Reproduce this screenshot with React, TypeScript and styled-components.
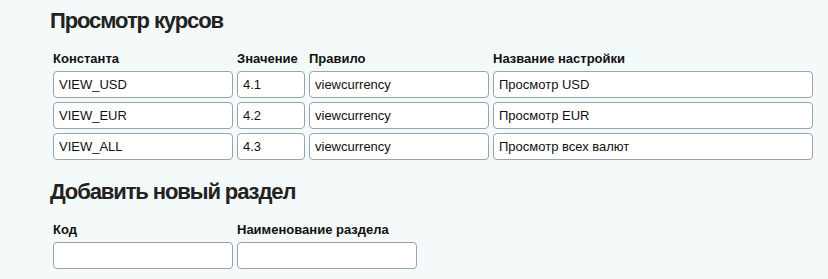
import React from 'react'
import styled, { createGlobalStyle } from 'styled-components'

const Global = createGlobalStyle`
  html, body {
    margin: 0;
    padding: 0;
    background: #f4f9f9;
  }
  body {
    font-family: "Liberation Sans", Arial, sans-serif;
    color: #111;
  }
`

const Page = styled.div`
  padding: 7px 0 0 50px;
`

const Title = styled.h2<{ $gap?: number }>`
  margin: ${p => p.$gap || 0}px 0 0 0;
  font-size: 22px;
  font-weight: bold;
  letter-spacing: -1.1px;
  color: #222;
  line-height: 27px;
`

const Grid = styled.div<{ $cols: string }>`
  display: grid;
  grid-template-columns: ${p => p.$cols};
  column-gap: 4px;
  row-gap: 4px;
  margin: 17px 0 0 3px;
`

const Label = styled.div`
  font-size: 13px;
  font-weight: bold;
  color: #111;
  line-height: 15px;
  margin-bottom: 1px;
`

const Field = styled.input`
  box-sizing: border-box;
  width: 100%;
  height: 27px;
  margin: 0;
  padding: 0 5px;
  border: 1px solid #9aa3ab;
  border-radius: 4px;
  background: #fff;
  font-family: "Liberation Sans", Arial, sans-serif;
  font-size: 13px;
  color: #111;
  outline: none;
`

const rows = [
  ['VIEW_USD', '4.1', 'viewcurrency', 'Просмотр USD'],
  ['VIEW_EUR', '4.2', 'viewcurrency', 'Просмотр EUR'],
  ['VIEW_ALL', '4.3', 'viewcurrency', 'Просмотр всех валют'],
]

export default function App() {
  return (
    <>
      <Global />
      <Page>
        <Title>Просмотр курсов</Title>
        <Grid $cols="180px 68px 180px 320px">
          <Label>Константа</Label>
          <Label>Значение</Label>
          <Label>Правило</Label>
          <Label>Название настройки</Label>
          {rows.map((r, i) =>
            r.map((v, j) => <Field key={i + '-' + j} defaultValue={v} />)
          )}
        </Grid>
        <Title $gap={18}>Добавить новый раздел</Title>
        <Grid $cols="180px 180px">
          <Label>Код</Label>
          <Label>Наименование раздела</Label>
          <Field />
          <Field />
        </Grid>
      </Page>
    </>
  )
}
